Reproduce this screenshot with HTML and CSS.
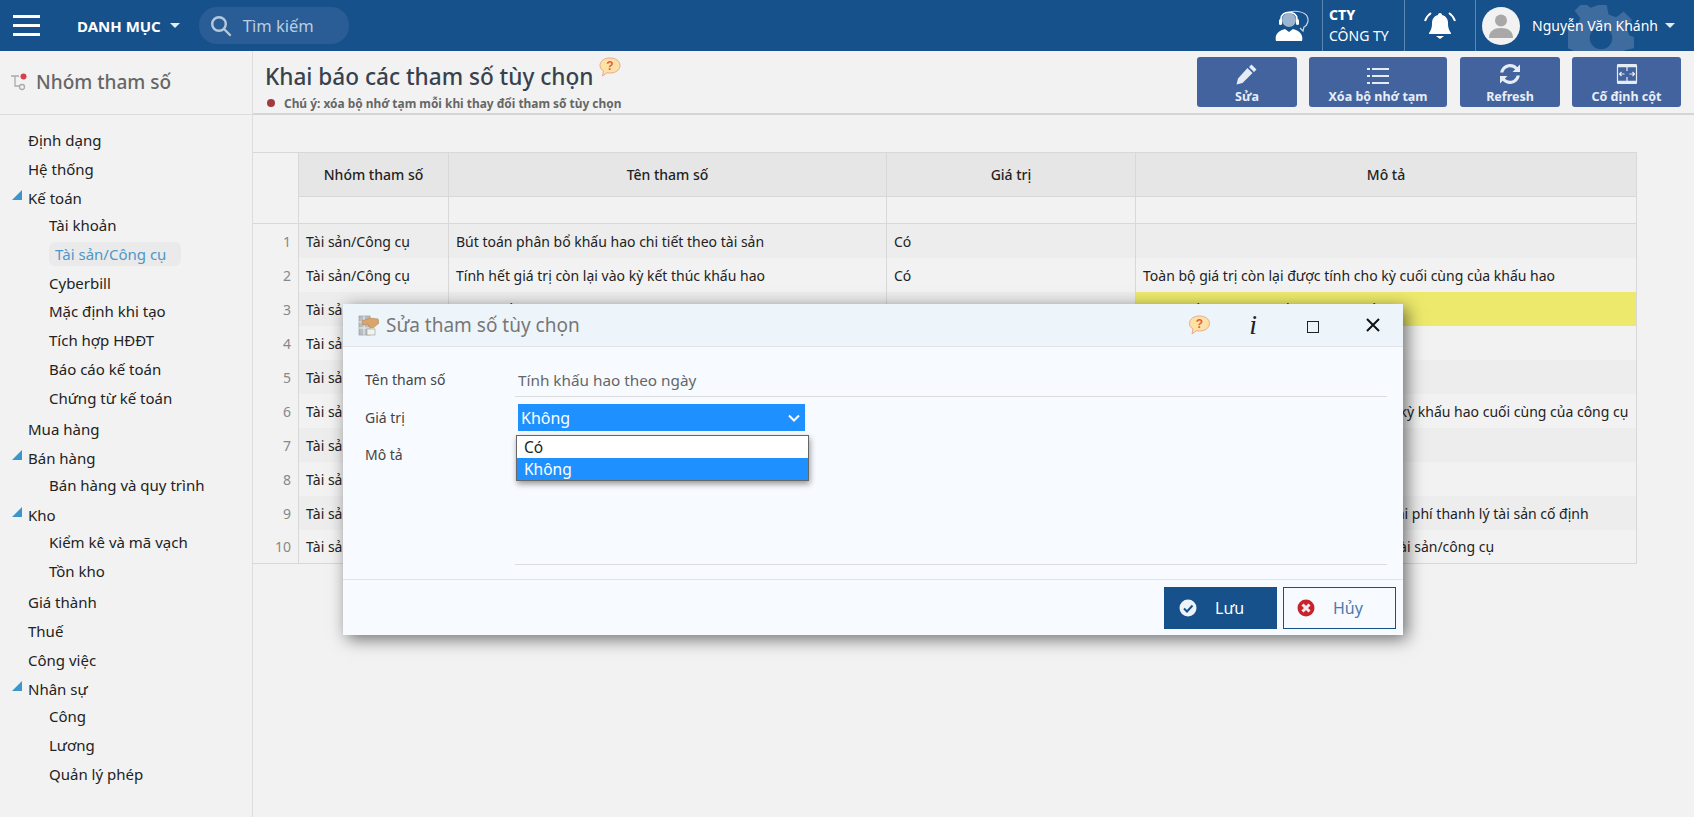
FILE: index.html
```html
<!DOCTYPE html>
<html lang="vi">
<head>
  <meta charset="UTF-8">
  <meta name="viewport" content="width=device-width, initial-scale=1.0">
  <title>Khai báo các tham số tùy chọn</title>
  <link rel="stylesheet" href="styles.css">
</head>
<body>
  <header class="topbar">
    <svg class="gear" viewBox="0 0 70 70"><path fill="#3f6c9f" d="M29 0h12l2 10 8 3 8-6 9 9-6 8 3 8 5 2v12l-10 2-3 8 6 8-9 9-8-6-8 3-2 10H29l-2-10-8-3-8 6-9-9 6-8-3-8-5-2V24l10-2 3-8-6-8 9-9 8 6 8-3zM35 23a12 12 0 1 0 0 24 12 12 0 0 0 0-24z"/></svg>
    <div class="burger"><span></span><span></span><span></span></div>
    <div class="menu-label">DANH MỤC <i class="caret"></i></div>
    <div class="search">
      <svg width="22" height="22" viewBox="0 0 22 22" fill="none" stroke="#b5c9de" stroke-width="2.4"><circle cx="9" cy="9" r="6.8"/><path d="M14 14l6 6" stroke-linecap="round"/></svg>
      <span>Tìm kiếm</span>
    </div>
    <div class="top-right">
      <div class="support">
        <svg width="34" height="32" viewBox="0 0 34 32"><path fill="none" stroke="#c9d6e6" stroke-width="1.2" d="M13 3c4-3 16-2 19 3 2 4 1 9-3 11l-1 4-3-3"/><circle cx="14" cy="10" r="7" fill="#c9d6e6" opacity=".75"/><path fill="none" stroke="#fff" stroke-width="1.6" d="M6 12V9c0-9 16-9 16 0v3"/><rect x="4" y="9" width="3" height="6" rx="1.5" fill="#fff"/><rect x="21" y="9" width="3" height="6" rx="1.5" fill="#fff"/><path fill="#fff" d="M1 31c-2-8 5-11 9-12l4 3 4-3c4 1 11 4 9 12z"/></svg>
      </div>
      <div class="company"><b>CTY</b><span>CÔNG TY</span></div>
      <div class="bell">
        <svg width="32" height="30" viewBox="0 0 32 30"><path fill="#fff" d="M16 2c1.500 0 2 1 2 2 4 1 6 4 6 8 0 5 1 7 3 10v1H5v-1c2-3 3-5 3-10 0-4 2-7 6-8 0-1 .5-2 2-2zM12 25h8l-4 3z"/><path fill="none" stroke="#fff" stroke-width="2" d="M7 2C4 4 2 7 1 10M25 2c3 2 5 5 6 8"/></svg>
      </div>
      <div class="user">
        <div class="avatar"><svg width="26" height="26" viewBox="0 0 26 26" fill="#a8a8a8"><circle cx="13" cy="7.500" r="6"/><path d="M1 25c0-7 5-10 12-10s12 3 12 10z"/></svg></div>
        <span>Nguyễn Văn Khánh</span>
        <i class="caret"></i>
      </div>
    </div>
  </header>

  <div class="layout">
    <aside class="sidebar">
      <div class="side-head">
        <svg width="18" height="18" viewBox="0 0 18 18" fill="none" stroke="#aaa" stroke-width="1.3"><path d="M1 3h8M5 3v10h5"/><circle cx="12" cy="14" r="2.500"/><circle cx="13.500" cy="3.500" r="3" fill="#d8404c" stroke="none"/></svg>
        <span>Nhóm tham số</span>
      </div>
      <ul class="tree">
        <li>Định dạng</li>
        <li>Hệ thống</li>
        <li class="open">Kế toán
          <ul>
            <li>Tài khoản</li>
            <li><span class="selected">Tài sản/Công cụ</span></li>
            <li>Cyberbill</li>
            <li>Mặc định khi tạo</li>
            <li>Tích hợp HĐĐT</li>
            <li>Báo cáo kế toán</li>
            <li>Chứng từ kế toán</li>
          </ul>
        </li>
        <li>Mua hàng</li>
        <li class="open">Bán hàng
          <ul>
            <li>Bán hàng và quy trình</li>
          </ul>
        </li>
        <li class="open">Kho
          <ul>
            <li>Kiểm kê và mã vạch</li>
            <li>Tồn kho</li>
          </ul>
        </li>
        <li>Giá thành</li>
        <li>Thuế</li>
        <li>Công việc</li>
        <li class="open">Nhân sự
          <ul>
            <li>Công</li>
            <li>Lương</li>
            <li>Quản lý phép</li>
          </ul>
        </li>
      </ul>
    </aside>

    <main class="content">
      <div class="page-head">
        <div class="page-title">
          <h1>Khai báo các tham số tùy chọn
            <svg class="help-top" width="22" height="20" viewBox="0 0 22 20"><path fill="#fde2a6" stroke="#e9a98a" d="M11 1c5.500 0 10 3 10 7.500S16.500 16 11 16c-1 0-2 0-3-.3L3.500 19 4.500 14C2 12.500 1 10.500 1 8.500 1 4 5.500 1 11 1z"/><text x="11" y="13" text-anchor="middle" class="help-mark">?</text></svg>
          </h1>
          <p class="note">Chú ý: xóa bộ nhớ tạm mỗi khi thay đổi tham số tùy chọn</p>
        </div>
        <div class="toolbar">
          <button class="tool-btn btn-edit">
            <svg width="22" height="22" viewBox="0 0 22 22" fill="#e6ecf5"><path d="M15.500 1.500l5 5-2.500 2.500-5-5zM11.500 5l5 5-10 10-6 1.500L2 15.500z"/></svg>
            Sửa
          </button>
          <button class="tool-btn btn-clear">
            <svg width="22" height="18" viewBox="0 0 22 18" fill="#e6ecf5"><rect x="0" y="1" width="3" height="2"/><rect x="5" y="1" width="17" height="2"/><rect x="0" y="8" width="3" height="2"/><rect x="5" y="8" width="17" height="2"/><rect x="0" y="15" width="3" height="2"/><rect x="5" y="15" width="17" height="2"/></svg>
            Xóa bộ nhớ tạm
          </button>
          <button class="tool-btn btn-refresh">
            <svg width="22" height="22" viewBox="0 0 22 22" fill="#e6ecf5"><path d="M11 1c3 0 5.500 1.200 7.300 3.200L21 1.500V9h-7.500l2.600-2.600C14.800 5 13 4.200 11 4.200 7.800 4.200 5 6.500 4.400 9.500H1.200C1.900 4.700 6 1 11 1zM1 13h7.500l-2.600 2.600c1.300 1.400 3.100 2.200 5.100 2.200 3.200 0 6-2.300 6.600-5.300h3.200C20.100 17.300 16 21 11 21c-3 0-5.500-1.200-7.300-3.200L1 20.500z"/></svg>
            Refresh
          </button>
          <button class="tool-btn btn-freeze">
            <svg width="22" height="22" viewBox="0 0 22 22" fill="none" stroke="#e6ecf5" stroke-width="1.200"><rect x="1.500" y="1.500" width="19" height="19" rx="1"/><path d="M1 3h20M1 19h20" stroke-width="2.400"/><path d="M11 1v7M11 14v7"/><path d="M3.500 11h5M5.500 9l-2 2 2 2M18.500 11h-5M16.500 9l2 2-2 2"/></svg>
            Cố định cột
          </button>
        </div>
      </div>

      <table class="grid">
        <colgroup>
          <col class="col-index"><col class="col-group"><col class="col-name"><col class="col-value"><col class="col-desc">
        </colgroup>
        <thead>
          <tr class="head-row">
            <th class="index-head" rowspan="2"></th>
            <th>Nhóm tham số</th>
            <th>Tên tham số</th>
            <th>Giá trị</th>
            <th>Mô tả</th>
          </tr>
          <tr class="filter-row">
            <td></td><td></td><td></td><td></td>
          </tr>
        </thead>
        <tbody>
          <tr><td class="index">1</td><td>Tài sản/Công cụ</td><td>Bút toán phân bổ khấu hao chi tiết theo tài sản</td><td>Có</td><td></td></tr>
          <tr><td class="index">2</td><td>Tài sản/Công cụ</td><td>Tính hết giá trị còn lại vào kỳ kết thúc khấu hao</td><td>Có</td><td>Toàn bộ giá trị còn lại được tính cho kỳ cuối cùng của khấu hao</td></tr>
          <tr><td class="index">3</td><td>Tài sản/Công cụ</td><td>Tính khấu hao theo ngày</td><td>Không</td><td class="highlight">Tính khấu hao theo số ngày thực tế</td></tr>
          <tr><td class="index">4</td><td>Tài sản/Công cụ</td><td></td><td></td><td></td></tr>
          <tr><td class="index">5</td><td>Tài sản/Công cụ</td><td></td><td></td><td></td></tr>
          <tr><td class="index">6</td><td>Tài sản/Công cụ</td><td></td><td></td><td>Toàn bộ giá trị còn lại sẽ được tính cho kỳ khấu hao cuối cùng của công cụ</td></tr>
          <tr><td class="index">7</td><td>Tài sản/Công cụ</td><td></td><td></td><td></td></tr>
          <tr><td class="index">8</td><td>Tài sản/Công cụ</td><td></td><td></td><td></td></tr>
          <tr><td class="index">9</td><td>Tài sản/Công cụ</td><td></td><td></td><td>Tài khoản dùng cho hạch toán khoản chi phí thanh lý tài sản cố định</td></tr>
          <tr><td class="index">10</td><td>Tài sản/Công cụ</td><td></td><td></td><td>Các chứng từ dùng ghi giảm, thanh lý tài sản/công cụ</td></tr>
        </tbody>
      </table>
    </main>
  </div>

  <div class="dialog">
    <div class="dialog-title">
      <svg width="21" height="21" viewBox="0 0 21 21"><rect x="1" y="1" width="11" height="19" fill="#b9bdc0" stroke="#8d9194" stroke-width=".6"/><path stroke="#eef0f1" d="M1 7h11M1 13h11M6 1v19"/><rect x="9" y="14" width="8" height="6" fill="#f2f2ee" stroke="#999" stroke-width=".6"/><path fill="#d9a56c" stroke="#b98448" stroke-width=".6" d="M4 6l8-3 8 1 1 4-6 5-4-1-1-3-5 1z"/></svg>
      <span>Sửa tham số tùy chọn</span>
      <div class="dialog-actions">
        <svg class="help-dlg" width="23" height="20" viewBox="0 0 22 20"><path fill="#fde2a6" stroke="#e9a98a" d="M11 1c5.500 0 10 3 10 7.500S16.500 16 11 16c-1 0-2 0-3-.3L3.500 19 4.500 14C2 12.500 1 10.500 1 8.500 1 4 5.500 1 11 1z"/><text x="11" y="13" text-anchor="middle" class="help-mark">?</text></svg>
        <i class="info">i</i>
        <span class="maximize"></span>
        <svg width="14" height="14" viewBox="0 0 14 14" stroke="#111" stroke-width="2"><path d="M1 1l12 12M13 1L1 13"/></svg>
      </div>
    </div>
    <div class="dialog-body">
      <div class="field field-name">
        <label>Tên tham số</label>
        <div class="field-value">Tính khấu hao theo ngày</div>
      </div>
      <div class="field field-select">
        <label>Giá trị</label>
        <div class="select">
          <span>Không</span>
          <svg width="12" height="8" viewBox="0 0 12 8" fill="none" stroke="#fff" stroke-width="2"><path d="M1 1.500l5 5 5-5"/></svg>
        </div>
        <ul class="options">
          <li>Có</li>
          <li class="active">Không</li>
        </ul>
      </div>
      <div class="field field-desc">
        <label>Mô tả</label>
        <div class="field-area"></div>
      </div>
    </div>
    <div class="dialog-foot">
      <button class="btn-save">
        <svg width="18" height="18" viewBox="0 0 18 18"><circle cx="9" cy="9" r="8.500" fill="#eef3f9"/><path d="M5 9.500l3 3 5.500-6" fill="none" stroke="#16518c" stroke-width="2"/></svg>
        Lưu
      </button>
      <button class="btn-cancel">
        <svg width="18" height="18" viewBox="0 0 18 18"><circle cx="9" cy="9" r="8.500" fill="#c8232c"/><path d="M5.500 5.500l7 7M12.500 5.500l-7 7" stroke="#f4eaea" stroke-width="3"/></svg>
        Hủy
      </button>
    </div>
  </div>
</body>
</html>
```

FILE: styles.css
```css
*, *::before, *::after {
  margin: 0;
  padding: 0;
  box-sizing: border-box;
}

body {
  font-family: "Noto Sans", "Open Sans", sans-serif;
  font-size: 14px;
  color: #222;
  background-color: #f2f2f2;
  height: 100vh;
  overflow: hidden;
}

ul {
  list-style: none;
}

/* Top bar */
.topbar {
  position: relative;
  height: 51px;
  background-color: #16518c;
  color: white;
  display: flex;
  align-items: center;
  overflow: hidden;
}

.gear {
  position: absolute;
  left: 1568px;
  top: 5px;
  width: 66px;
  height: 66px;
}

.burger {
  width: 27px;
  margin-left: 13px;
  display: flex;
  flex-direction: column;
  gap: 6px;
}

.burger span {
  height: 3px;
  background-color: white;
}

.menu-label {
  margin-left: 37px;
  font-weight: 700;
  font-size: 15px;
  display: flex;
  align-items: center;
  gap: 9px;
  white-space: nowrap;
}

.caret {
  display: inline-block;
  border-left: 5px solid transparent;
  border-right: 5px solid transparent;
  border-top: 5px solid #e4ebf3;
}

.search {
  margin-left: 19px;
  width: 150px;
  height: 37px;
  border-radius: 18px;
  background-color: #2a5d95;
  display: flex;
  align-items: center;
  padding-left: 11px;
  gap: 11px;
  color: #bccde0;
  font-size: 16.500px;
}

.top-right {
  margin-left: auto;
  height: 51px;
  display: flex;
  position: relative;
}

.support {
  width: 47px;
  display: flex;
  align-items: center;
}

.company {
  width: 82px;
  border-left: 1px solid #5d86b0;
  padding-left: 6px;
  display: flex;
  flex-direction: column;
  font-size: 14px;
  line-height: 21px;
  padding-top: 4px;
}

.company b {
  font-weight: 800;
  font-size: 14px;
}

.bell {
  width: 71px;
  border-left: 1px solid #5d86b0;
  display: flex;
  align-items: center;
  justify-content: center;
}

.user {
  width: 219px;
  border-left: 1px solid #5d86b0;
  display: flex;
  align-items: center;
  padding-left: 6px;
  font-size: 14px;
  white-space: nowrap;
}

.avatar {
  width: 38px;
  height: 38px;
  border-radius: 50%;
  background-color: #f2f2f2;
  display: flex;
  align-items: flex-end;
  justify-content: center;
  padding-bottom: 6px;
  margin-right: 12px;
}

.user .caret {
  margin-left: 7px;
}

.layout {
  display: flex;
  height: calc(100vh - 51px);
}

/* Sidebar */
.sidebar {
  width: 253px;
  flex-shrink: 0;
  border-right: 1px solid #ddd;
}

.side-head {
  height: 64px;
  border-bottom: 1px solid #ddd;
  display: flex;
  align-items: center;
  padding: 0 0 2px 10px;
  gap: 8px;
  font-size: 19px;
  font-weight: 500;
  color: #666;
}

.tree {
  padding-top: 11px;
  line-height: 29px;
  font-size: 15px;
}

.tree > li {
  position: relative;
  padding-left: 28px;
}

.tree > li.open::before {
  content: "";
  position: absolute;
  left: 12px;
  top: 6px;
  border-left: 10px solid transparent;
  border-bottom: 10px solid #3b96cb;
}

.tree ul {
  margin: -2px 0 2px 21px;
}

.tree ul li {
  height: 28.800px;
}

.selected {
  display: inline-block;
  vertical-align: top;
  background-color: #eaeaea;
  color: #4d97c9;
  border-radius: 6px;
  line-height: 24px;
  padding: 0 6px;
  margin-top: 2px;
  width: 132px;
  white-space: nowrap;
}

/* Page heading */
.content {
  flex: 1;
  min-width: 0;
}

.page-head {
  height: 64px;
  border-bottom: 2px solid #d5d5d5;
  display: flex;
  justify-content: space-between;
  padding: 6px 13px 0 12px;
}

.page-title h1 {
  font-size: 22.600px;
  font-weight: 500;
  color: #36424e;
  line-height: 36px;
  white-space: nowrap;
}

.help-top {
  vertical-align: 8px;
}

.help-mark {
  font-family: "Liberation Sans", sans-serif;
  font-size: 12px;
  font-weight: 700;
  fill: #e2603a;
}

.note {
  position: relative;
  margin-top: 0;
  padding-left: 19px;
  font-size: 11.900px;
  font-weight: 700;
  color: #666;
  line-height: 16px;
  white-space: nowrap;
}

.note::before {
  content: "";
  position: absolute;
  left: 2px;
  top: 4px;
  width: 8px;
  height: 8px;
  border-radius: 50%;
  background-color: #a23b40;
}

.toolbar {
  display: flex;
  gap: 12px;
}

.tool-btn {
  height: 50px;
  border: none;
  border-radius: 3px;
  background-color: #43639e;
  color: #e8eef7;
  font-family: inherit;
  font-size: 12.500px;
  font-weight: 700;
  display: flex;
  flex-direction: column;
  align-items: center;
  justify-content: flex-end;
  gap: 3px;
  padding-bottom: 2px;
  white-space: nowrap;
}

.btn-edit, .btn-refresh {
  width: 100px;
}

.btn-clear {
  width: 138px;
  margin-right: 1px;
}

.btn-freeze {
  width: 109px;
}

/* Grid */
.grid {
  margin-top: 37px;
  width: 1384px;
  table-layout: fixed;
  border-collapse: separate;
  border-spacing: 0;
  border-top: 1px solid #d8d8d8;
  border-right: 1px solid #d8d8d8;
  font-size: 14px;
}

.col-index { width: 46px; }
.col-group { width: 150px; }
.col-name { width: 438px; }
.col-value { width: 249px; }

.grid th, .grid td {
  border-right: 1px solid #d8d8d8;
  white-space: nowrap;
  overflow: hidden;
}

.grid th:last-child, .grid td:last-child {
  border-right: none;
}

.grid th {
  height: 44px;
  background-color: #e6e6e6;
  border-bottom: 1px solid #d8d8d8;
  font-weight: 500;
  color: #222;
}

.grid .index-head {
  background-color: #f2f2f2;
}

.filter-row td {
  height: 27px;
  border-bottom: 1px solid #d8d8d8;
}

.grid tbody td {
  height: 34px;
  padding: 0 7px;
}

.grid tbody tr:nth-child(odd) td {
  background-color: #ededed;
}

.grid tbody tr:last-child td {
  border-bottom: 1px solid #d8d8d8;
}

.grid tbody tr td.index {
  background-color: #f2f2f2;
  text-align: right;
  color: #888;
}

.grid tbody tr td.highlight {
  background-color: #ede96c;
}

/* Dialog */
.dialog {
  position: absolute;
  left: 343px;
  top: 304px;
  width: 1060px;
  height: 331px;
  background-color: #f7fbff;
  box-shadow: 4px 4px 16px rgba(0, 0, 0, 0.55);
  display: flex;
  flex-direction: column;
}

.dialog-title {
  height: 43px;
  flex-shrink: 0;
  background-color: #edf5fb;
  border-bottom: 1px solid #dfe3e6;
  display: flex;
  align-items: center;
  padding: 0 23px 0 15px;
  gap: 7px;
  font-size: 19px;
  color: #777;
}

.dialog-actions {
  margin-left: auto;
  display: flex;
  align-items: center;
}

.help-dlg {
  margin-right: 38px;
}

.info {
  font-family: "Liberation Serif", serif;
  font-size: 28px;
  color: #222;
  line-height: 26px;
  margin-right: 50px;
}

.maximize {
  width: 12px;
  height: 12px;
  border: 1.500px solid #222;
  margin: 4px 47px 0 0;
}

.dialog-body {
  flex: 1;
  position: relative;
  padding: 16px 16px 0 22px;
}

.field {
  display: flex;
  position: relative;
}

.field label {
  width: 150px;
  flex-shrink: 0;
  color: #444;
}

.field-name {
  height: 41px;
}

.field-name label {
  line-height: 34px;
}

.field-value {
  flex: 1;
  padding-left: 3px;
  height: 34px;
  line-height: 34px;
  border-bottom: 1px solid #ddd;
  color: #666;
  font-size: 15.300px;
}

.field-select {
  height: 38px;
}

.field-select label {
  line-height: 28px;
}

.select {
  margin-left: 3px;
  width: 287px;
  height: 27px;
  background-color: #1e90ff;
  color: white;
  padding: 0 5px 0 3px;
  display: flex;
  align-items: center;
  justify-content: space-between;
  font-size: 16px;
}

.options {
  position: absolute;
  left: 151px;
  top: 31px;
  width: 293px;
  background-color: white;
  border: 1px solid #666;
  box-shadow: 1px 3px 6px rgba(0, 0, 0, 0.4);
  line-height: 22px;
  font-size: 15.500px;
  z-index: 2;
}

.options li {
  padding-left: 7px;
  height: 22px;
}

.options .active {
  background-color: #1e90ff;
  color: white;
}

.field-desc label {
  line-height: 26px;
}

.field-area {
  flex: 1;
  height: 123px;
  border-bottom: 1px solid #ddd;
}

.dialog-foot {
  height: 56px;
  flex-shrink: 0;
  border-top: 1px solid #e0e4e7;
  display: flex;
  justify-content: flex-end;
  gap: 6px;
  padding: 7px 7px 6px 0;
}

.dialog-foot button {
  width: 113px;
  font-family: inherit;
  font-size: 16px;
  display: flex;
  align-items: center;
  padding-left: 15px;
  gap: 18px;
}

.btn-save {
  background-color: #16518c;
  color: white;
  border: none;
}

.dialog-foot .btn-cancel {
  background-color: transparent;
  color: #4a7ab0;
  border: 1px solid #16518c;
  padding-left: 13px;
}
```
